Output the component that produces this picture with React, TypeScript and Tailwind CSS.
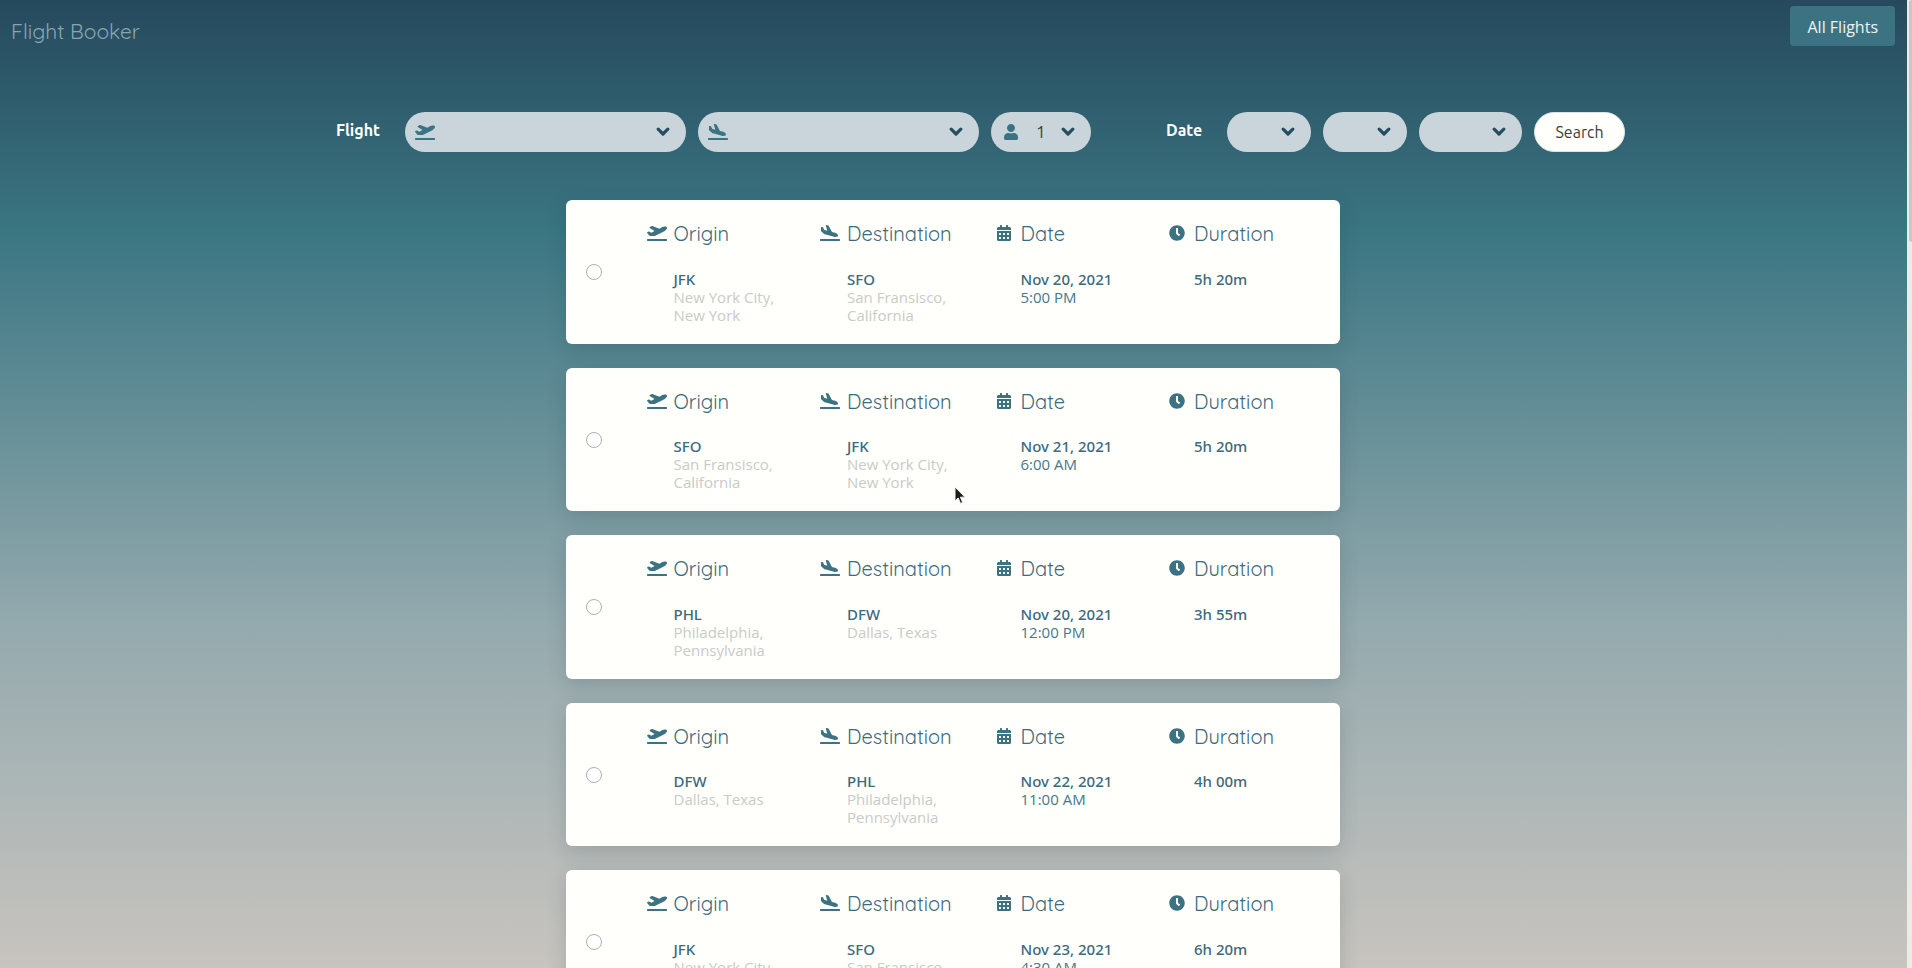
import { FaPlaneDeparture, FaPlaneArrival, FaUser, FaCalendarAlt, FaClock } from "react-icons/fa";
import type { ReactNode } from "react";

type Flight = {
  origin: string;
  originCity: string;
  destination: string;
  destinationCity: string;
  date: string;
  time: string;
  duration: string;
};

const NYC = "New York City, New York";
const SF = "San Fransisco, California";
const PHILLY = "Philadelphia, Pennsylvania";
const DALLAS = "Dallas, Texas";

const flights: Flight[] = [
  { origin: "JFK", originCity: NYC, destination: "SFO", destinationCity: SF, date: "Nov 20, 2021", time: "5:00 PM", duration: "5h 20m" },
  { origin: "SFO", originCity: SF, destination: "JFK", destinationCity: NYC, date: "Nov 21, 2021", time: "6:00 AM", duration: "5h 20m" },
  { origin: "PHL", originCity: PHILLY, destination: "DFW", destinationCity: DALLAS, date: "Nov 20, 2021", time: "12:00 PM", duration: "3h 55m" },
  { origin: "DFW", originCity: DALLAS, destination: "PHL", destinationCity: PHILLY, date: "Nov 22, 2021", time: "11:00 AM", duration: "4h 00m" },
  { origin: "JFK", originCity: NYC, destination: "SFO", destinationCity: SF, date: "Nov 23, 2021", time: "4:30 AM", duration: "6h 20m" },
];

function Chevron() {
  return (
    <svg viewBox="0 0 14 10" className="h-[10px] w-[14px] shrink-0 text-[#264e62]" aria-hidden="true">
      <path d="M2.2 2.2 7 7 11.8 2.2" fill="none" stroke="currentColor" strokeWidth="3.2" strokeLinecap="round" strokeLinejoin="round" />
    </svg>
  );
}

function SelectPill({ label, className, icon, children }: { label: string; className: string; icon?: ReactNode; children?: ReactNode }) {
  return (
    <div className={`grid h-10 items-center rounded-full bg-[#c9d5da] ${className}`}>
      <select aria-label={label} className="col-start-1 row-start-1 h-10 w-full appearance-none rounded-full bg-transparent pl-[45px] text-[17px] text-[#3b3b3b]">
        {children ?? <option></option>}
      </select>
      <span className="pointer-events-none col-start-1 row-start-1 flex items-center justify-between pr-4 pl-[10px]">
        <span className="flex w-5 justify-center text-[#3c7383]">{icon}</span>
        <Chevron />
      </span>
    </div>
  );
}

function Column({ title, icon, children }: { title: string; icon: ReactNode; children?: ReactNode }) {
  return (
    <div className="grid grid-cols-[22px_1fr] content-start gap-x-[6px]">
      <span className="flex h-[26px] items-center justify-center text-[#3c7383]">{icon}</span>
      <h2 className="font-[Quicksand,Lato,sans-serif] text-[20px] leading-snug font-normal text-[#3c6a7e]">{title}</h2>
      <div className="col-start-2 mt-[22px] pr-5 text-[15px] leading-[18px] text-[#46788a]">{children}</div>
    </div>
  );
}

function Strong({ children }: { children: ReactNode }) {
  return <p className="font-['Noto_Sans','Open_Sans',sans-serif] font-medium whitespace-nowrap text-[#3c6a7e]">{children}</p>;
}

function FlightCard({ flight, index }: { flight: Flight; index: number }) {
  return (
    <label className="flex items-start rounded-md bg-[#fffffb] py-5 pl-5 shadow-[0_6px_20px_rgba(30,50,60,0.18)]">
      <input
        type="radio"
        name="flight"
        value={index}
        aria-label={`${flight.origin} to ${flight.destination}, ${flight.date}`}
        className="mt-11 size-4 shrink-0 appearance-none rounded-full border border-[#adb0ae] bg-white checked:border-4 checked:border-[#3c7383]"
      />
      <div className="ml-11 grid flex-1 grid-cols-4">
        <Column title="Origin" icon={<FaPlaneDeparture size={20} />}>
          <Strong>{flight.origin}</Strong>
          <p className="min-h-9 text-[#c9cbc9]">{flight.originCity}</p>
        </Column>
        <Column title="Destination" icon={<FaPlaneArrival size={20} />}>
          <Strong>{flight.destination}</Strong>
          <p className="min-h-9 text-[#c9cbc9]">{flight.destinationCity}</p>
        </Column>
        <Column title="Date" icon={<FaCalendarAlt size={16} />}>
          <Strong>{flight.date}</Strong>
          <p>{flight.time}</p>
        </Column>
        <Column title="Duration" icon={<FaClock size={16} />}>
          <Strong>{flight.duration}</Strong>
        </Column>
      </div>
    </label>
  );
}

export default function App() {
  return (
    <div className="relative flex h-screen overflow-hidden font-['Open_Sans',sans-serif]">
      <div className="h-full min-w-0 flex-1 overflow-hidden bg-[linear-gradient(to_bottom,#26495d,#3b7683_24%,#95aaae_65%,#c8c4bf)]">
        <header className="flex items-start justify-between pt-[6px] pr-3 pl-[11px]">
          <a href="#" className="mt-[11px] font-[Quicksand,Lato,sans-serif] text-[21px] leading-7 text-[#8aa6ad]">Flight Booker</a>
          <a href="#" className="flex h-10 items-center rounded bg-[#3c7383] px-[17px] pt-[2px] text-base text-[#eef3f3]">All Flights</a>
        </header>

        <form className="mt-[66px] flex items-center pl-[336px] font-[Ubuntu,'Open_Sans',sans-serif]" onSubmit={(e) => e.preventDefault()}>
          <fieldset className="flex items-center gap-3">
            <span className="mr-3 w-[45px] pb-1 text-base font-bold text-white">Flight</span>
            <SelectPill label="Origin" className="w-[281px]" icon={<FaPlaneDeparture size={20} />} />
            <SelectPill label="Destination" className="w-[281px]" icon={<FaPlaneArrival size={20} />} />
            <SelectPill label="Passengers" className="w-[100px]" icon={<FaUser size={16} />}>
              <option>1</option>
              <option>2</option>
              <option>3</option>
              <option>4</option>
            </SelectPill>
          </fieldset>
          <fieldset className="ml-[75px] flex items-center gap-3">
            <span className="mr-3 w-[37px] pb-1 text-base font-bold text-white">Date</span>
            <SelectPill label="Month" className="w-[84px]" />
            <SelectPill label="Day" className="w-[84px]" />
            <SelectPill label="Year" className="w-[103px]" />
            <button type="submit" className="h-10 w-[91px] rounded-full border border-[#dde3e3] bg-[#fffffc] text-base text-[#3b3b3b]">Search</button>
          </fieldset>
        </form>

        <div className="flex justify-center pt-12 pr-[2px]">
          <main className="flex w-[774px] max-w-full flex-col gap-6">
            {flights.map((flight, i) => (
              <FlightCard key={i} flight={flight} index={i} />
            ))}
          </main>
        </div>
      </div>
      <div className="w-[5px] bg-[#ecebe8] pl-[2px]" aria-hidden="true">
        <div className="h-1/4 rounded-l bg-[#c8c8c8]" />
      </div>
      <svg viewBox="0 0 12 19" className="pointer-events-none absolute top-[486px] left-[954px] h-[19px] w-3" aria-hidden="true">
        <path d="M1 1v14l3.2-3 2.3 5.4 2.2-1-2.3-5.2H11z" fill="#1c1c1c" stroke="#f4f4f4" strokeWidth="1" />
      </svg>
    </div>
  );
}
